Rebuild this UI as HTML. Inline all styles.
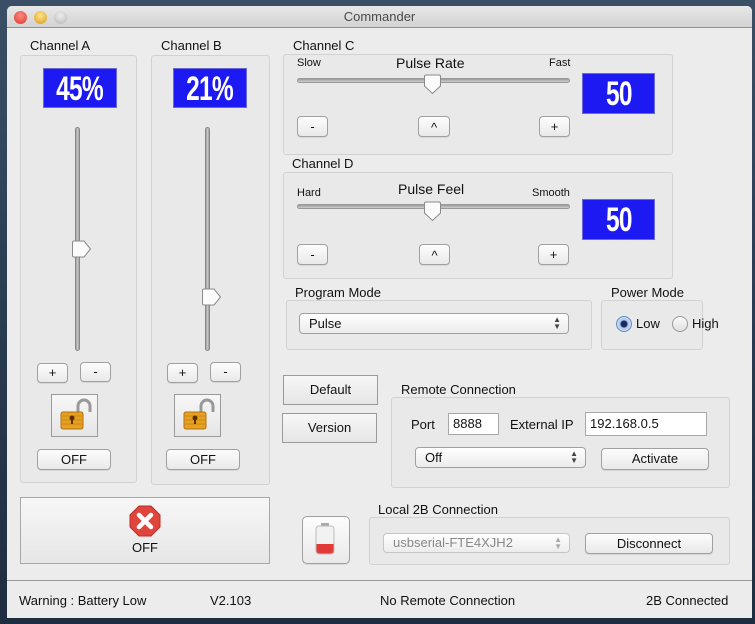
<!DOCTYPE html>
<html><head><meta charset="utf-8"><style>
*{box-sizing:border-box;margin:0;padding:0}
body{width:755px;height:624px;overflow:hidden;background:linear-gradient(180deg,#3a4f66 0%,#2c3f55 40%,#1f2d40 100%);font-family:"Liberation Sans",sans-serif;font-size:13px;color:#111;position:relative}
.a{position:absolute}
#win{left:7px;top:6px;width:745px;height:612px;background:#ececec;border-radius:5px 5px 0 0;overflow:hidden}
#title{left:0;top:0;width:745px;height:22px;background:linear-gradient(#e8e8e8,#d3d3d3);border-bottom:1px solid #8e8e8e;text-align:center;line-height:22px;color:#4a4a4a;font-size:13px}
.dot{width:13px;height:13px;border-radius:50%;top:5px}
.box{border:1px solid #d2d2d2;background:#e9e9e9;border-radius:3px}
.lbl{font-size:13px;white-space:nowrap}
.btn{border:1px solid #a0a0a0;border-radius:4px;background:linear-gradient(#fdfdfd,#e9e9e9);text-align:center;font-size:13px;box-shadow:0 1px 0 rgba(0,0,0,.08)}
.sq{border:1px solid #9a9a9a;background:linear-gradient(#f7f7f7,#e6e6e6);text-align:center}
.disp{background:#1c19f2;border:1px solid #6a6ad0;color:#fff;font-family:"Liberation Sans",sans-serif;font-weight:bold;font-size:34px;text-align:center;overflow:hidden}
.disp span{display:inline-block;transform:scaleX(0.72);letter-spacing:-1px}
.vtrack{width:5px;border-radius:3px;background:linear-gradient(90deg,#9a9a9a,#cfcfcf,#9a9a9a);border:1px solid #888}
.htrack{height:5px;border-radius:3px;background:linear-gradient(#9a9a9a,#cfcfcf);border:1px solid #999}
.field{background:#fff;border:1px solid #a8a8a8;font-size:13px;padding-left:4px}
.pop{border:1px solid #a0a0a0;border-radius:4px;background:linear-gradient(#fff,#ececec);font-size:13px;padding-left:9px}
.arr{position:absolute;right:7px;top:2px;font-size:8px;line-height:7px;color:#444}
</style></head><body>
<div id="win" class="a">
<div id="title" class="a">Commander</div>
<div class="a dot" style="left:7px;background:radial-gradient(circle at 50% 35%,#ff8b80,#d9342a)"></div>
<div class="a dot" style="left:27px;background:radial-gradient(circle at 50% 35%,#ffe48a,#d99a1a)"></div>
<div class="a dot" style="left:47px;background:radial-gradient(circle at 50% 35%,#eee,#b5b5b5)"></div>
</div>

<!-- Channel A -->
<div class="a lbl" style="left:30px;top:38px">Channel A</div>
<div class="a box" style="left:20px;top:55px;width:117px;height:428px"></div>
<div class="a disp" style="left:43px;top:68px;width:74px;height:40px;line-height:40px"><span>45%</span></div>
<div class="a vtrack" style="left:75px;top:127px;height:224px"></div>
<svg class="a" style="left:71px;top:240px" width="21" height="19"><path d="M1.5 2.5Q1.5 1 3 1H13L19.5 9L13 17H3Q1.5 17 1.5 15.5Z" fill="#fbfbfb" stroke="#8a8a8a"/></svg>
<div class="a btn" style="left:37px;top:363px;width:31px;height:20px;line-height:18px">+</div>
<div class="a btn" style="left:80px;top:362px;width:31px;height:20px;line-height:18px">-</div>
<div class="a sq" style="left:51px;top:394px;width:47px;height:43px"></div>
<div class="a btn" style="left:37px;top:449px;width:74px;height:21px;line-height:19px">OFF</div>

<!-- Channel B -->
<div class="a lbl" style="left:161px;top:38px">Channel B</div>
<div class="a box" style="left:151px;top:55px;width:119px;height:430px"></div>
<div class="a disp" style="left:173px;top:68px;width:74px;height:40px;line-height:40px"><span>21%</span></div>
<div class="a vtrack" style="left:205px;top:127px;height:224px"></div>
<svg class="a" style="left:201px;top:288px" width="21" height="19"><path d="M1.5 2.5Q1.5 1 3 1H13L19.5 9L13 17H3Q1.5 17 1.5 15.5Z" fill="#fbfbfb" stroke="#8a8a8a"/></svg>
<div class="a btn" style="left:167px;top:363px;width:31px;height:20px;line-height:18px">+</div>
<div class="a btn" style="left:210px;top:362px;width:31px;height:20px;line-height:18px">-</div>
<div class="a sq" style="left:174px;top:394px;width:47px;height:43px"></div>
<div class="a btn" style="left:166px;top:449px;width:74px;height:21px;line-height:19px">OFF</div>

<!-- locks -->
<svg class="a" style="left:58px;top:397px" width="36" height="36"><path d="M20 16V9a6 6 0 0 1 12 0v6" fill="none" stroke="#999" stroke-width="3"/><rect x="3" y="15" width="22" height="17" rx="2" fill="#e8a020" stroke="#b07010"/><g stroke="#c98a1a"><line x1="4" y1="19" x2="24" y2="19"/><line x1="4" y1="23" x2="24" y2="23"/><line x1="4" y1="27" x2="24" y2="27"/></g><circle cx="14" cy="21" r="2.5" fill="#5a3000"/><rect x="13" y="21" width="2" height="6" fill="#5a3000"/></svg>
<svg class="a" style="left:181px;top:397px" width="36" height="36"><path d="M20 16V9a6 6 0 0 1 12 0v6" fill="none" stroke="#999" stroke-width="3"/><rect x="3" y="15" width="22" height="17" rx="2" fill="#e8a020" stroke="#b07010"/><g stroke="#c98a1a"><line x1="4" y1="19" x2="24" y2="19"/><line x1="4" y1="23" x2="24" y2="23"/><line x1="4" y1="27" x2="24" y2="27"/></g><circle cx="14" cy="21" r="2.5" fill="#5a3000"/><rect x="13" y="21" width="2" height="6" fill="#5a3000"/></svg>

<!-- big OFF -->
<div class="a sq" style="left:20px;top:497px;width:250px;height:67px;border-color:#a8a8a8"></div>
<svg class="a" style="left:129px;top:505px" width="32" height="32"><polygon points="10,1 22,1 31,10 31,22 22,31 10,31 1,22 1,10" fill="#e0453c" stroke="#b8302a"/><path d="M10 10L22 22M22 10L10 22" stroke="#fff" stroke-width="4.5" stroke-linecap="round"/></svg>
<div class="a" style="left:120px;top:540px;width:50px;text-align:center">OFF</div>

<!-- Channel C -->
<div class="a lbl" style="left:293px;top:38px">Channel C</div>
<div class="a box" style="left:283px;top:54px;width:390px;height:101px"></div>
<div class="a" style="left:297px;top:57px;font-size:11px">Slow</div>
<div class="a" style="left:396px;top:55px;font-size:14px">Pulse Rate</div>
<div class="a" style="left:549px;top:57px;font-size:11px">Fast</div>
<div class="a htrack" style="left:297px;top:78px;width:273px"></div>
<svg class="a" style="left:423px;top:74px" width="20" height="22"><path d="M1.5 2.5Q1.5 1 3 1H16Q17.5 1 17.5 2.5V12L9.5 19.5L1.5 12Z" fill="#fbfbfb" stroke="#8a8a8a"/></svg>
<div class="a btn" style="left:297px;top:116px;width:31px;height:21px;line-height:19px">-</div>
<div class="a btn" style="left:418px;top:116px;width:32px;height:21px;line-height:21px">^</div>
<div class="a btn" style="left:539px;top:116px;width:31px;height:21px;line-height:19px">+</div>
<div class="a disp" style="left:582px;top:73px;width:73px;height:41px;line-height:41px"><span>50</span></div>

<!-- Channel D -->
<div class="a lbl" style="left:292px;top:156px">Channel D</div>
<div class="a box" style="left:283px;top:172px;width:390px;height:107px"></div>
<div class="a" style="left:297px;top:187px;font-size:11px">Hard</div>
<div class="a" style="left:398px;top:181px;font-size:14px">Pulse Feel</div>
<div class="a" style="left:532px;top:187px;font-size:11px">Smooth</div>
<div class="a htrack" style="left:297px;top:204px;width:273px"></div>
<svg class="a" style="left:423px;top:201px" width="20" height="22"><path d="M1.5 2.5Q1.5 1 3 1H16Q17.5 1 17.5 2.5V12L9.5 19.5L1.5 12Z" fill="#fbfbfb" stroke="#8a8a8a"/></svg>
<div class="a btn" style="left:297px;top:244px;width:31px;height:21px;line-height:19px">-</div>
<div class="a btn" style="left:419px;top:244px;width:31px;height:21px;line-height:21px">^</div>
<div class="a btn" style="left:538px;top:244px;width:31px;height:21px;line-height:19px">+</div>
<div class="a disp" style="left:582px;top:199px;width:73px;height:41px;line-height:41px"><span>50</span></div>

<!-- Program Mode -->
<div class="a lbl" style="left:295px;top:285px">Program Mode</div>
<div class="a box" style="left:286px;top:300px;width:306px;height:50px"></div>
<div class="a pop" style="left:299px;top:313px;width:270px;height:21px;line-height:19px">Pulse<span class="arr">▲<br>▼</span></div>

<!-- Power Mode -->
<div class="a lbl" style="left:611px;top:285px">Power Mode</div>
<div class="a box" style="left:601px;top:300px;width:102px;height:50px"></div>
<div class="a" style="left:616px;top:316px;width:16px;height:16px;border-radius:50%;border:1px solid #6a8ab8;background:radial-gradient(circle,#1a2a60 0 3px,#a9c6ee 4px,#e6f0fb)"></div>
<div class="a" style="left:636px;top:316px;font-size:13px">Low</div>
<div class="a" style="left:672px;top:316px;width:16px;height:16px;border-radius:50%;border:1px solid #999;background:linear-gradient(#fafafa,#e0e0e0)"></div>
<div class="a" style="left:692px;top:316px;font-size:13px">High</div>

<!-- Default / Version -->
<div class="a sq" style="left:283px;top:375px;width:95px;height:30px;line-height:28px">Default</div>
<div class="a sq" style="left:282px;top:413px;width:95px;height:30px;line-height:28px">Version</div>

<!-- Remote -->
<div class="a lbl" style="left:401px;top:382px">Remote Connection</div>
<div class="a box" style="left:391px;top:397px;width:339px;height:91px"></div>
<div class="a" style="left:411px;top:417px">Port</div>
<div class="a field" style="left:448px;top:413px;width:51px;height:22px;line-height:20px">8888</div>
<div class="a" style="left:510px;top:417px">External IP</div>
<div class="a field" style="left:585px;top:412px;width:122px;height:24px;line-height:21px">192.168.0.5</div>
<div class="a pop" style="left:415px;top:447px;width:171px;height:21px;line-height:19px">Off<span class="arr">▲<br>▼</span></div>
<div class="a btn" style="left:601px;top:448px;width:108px;height:22px;line-height:20px">Activate</div>

<!-- Battery -->
<div class="a btn" style="left:302px;top:516px;width:48px;height:48px;border-radius:5px"></div>
<svg class="a" style="left:313px;top:522px" width="24" height="36"><rect x="8" y="1" width="8" height="3" fill="#aaa"/><rect x="3" y="4" width="18" height="28" rx="3" fill="#f2f2f2" stroke="#bbb"/><path d="M3.5 22H20.5V29Q20.5 31.5 17 31.5H7Q3.5 31.5 3.5 29Z" fill="#e23a36"/></svg>

<!-- Local 2B -->
<div class="a lbl" style="left:378px;top:502px">Local 2B Connection</div>
<div class="a box" style="left:369px;top:517px;width:361px;height:48px"></div>
<div class="a pop" style="left:383px;top:533px;width:187px;height:20px;line-height:18px;color:#888;border-color:#c6c6c6">usbserial-FTE4XJH2<span class="arr" style="color:#aaa">▲<br>▼</span></div>
<div class="a btn" style="left:585px;top:533px;width:128px;height:21px;line-height:19px">Disconnect</div>

<!-- status -->
<div class="a" style="left:7px;top:580px;width:745px;height:1px;background:#9a9a9a"></div>
<div class="a" style="left:19px;top:593px">Warning : Battery Low</div>
<div class="a" style="left:210px;top:593px">V2.103</div>
<div class="a" style="left:380px;top:593px">No Remote Connection</div>
<div class="a" style="left:646px;top:593px">2B Connected</div>
</body></html>
